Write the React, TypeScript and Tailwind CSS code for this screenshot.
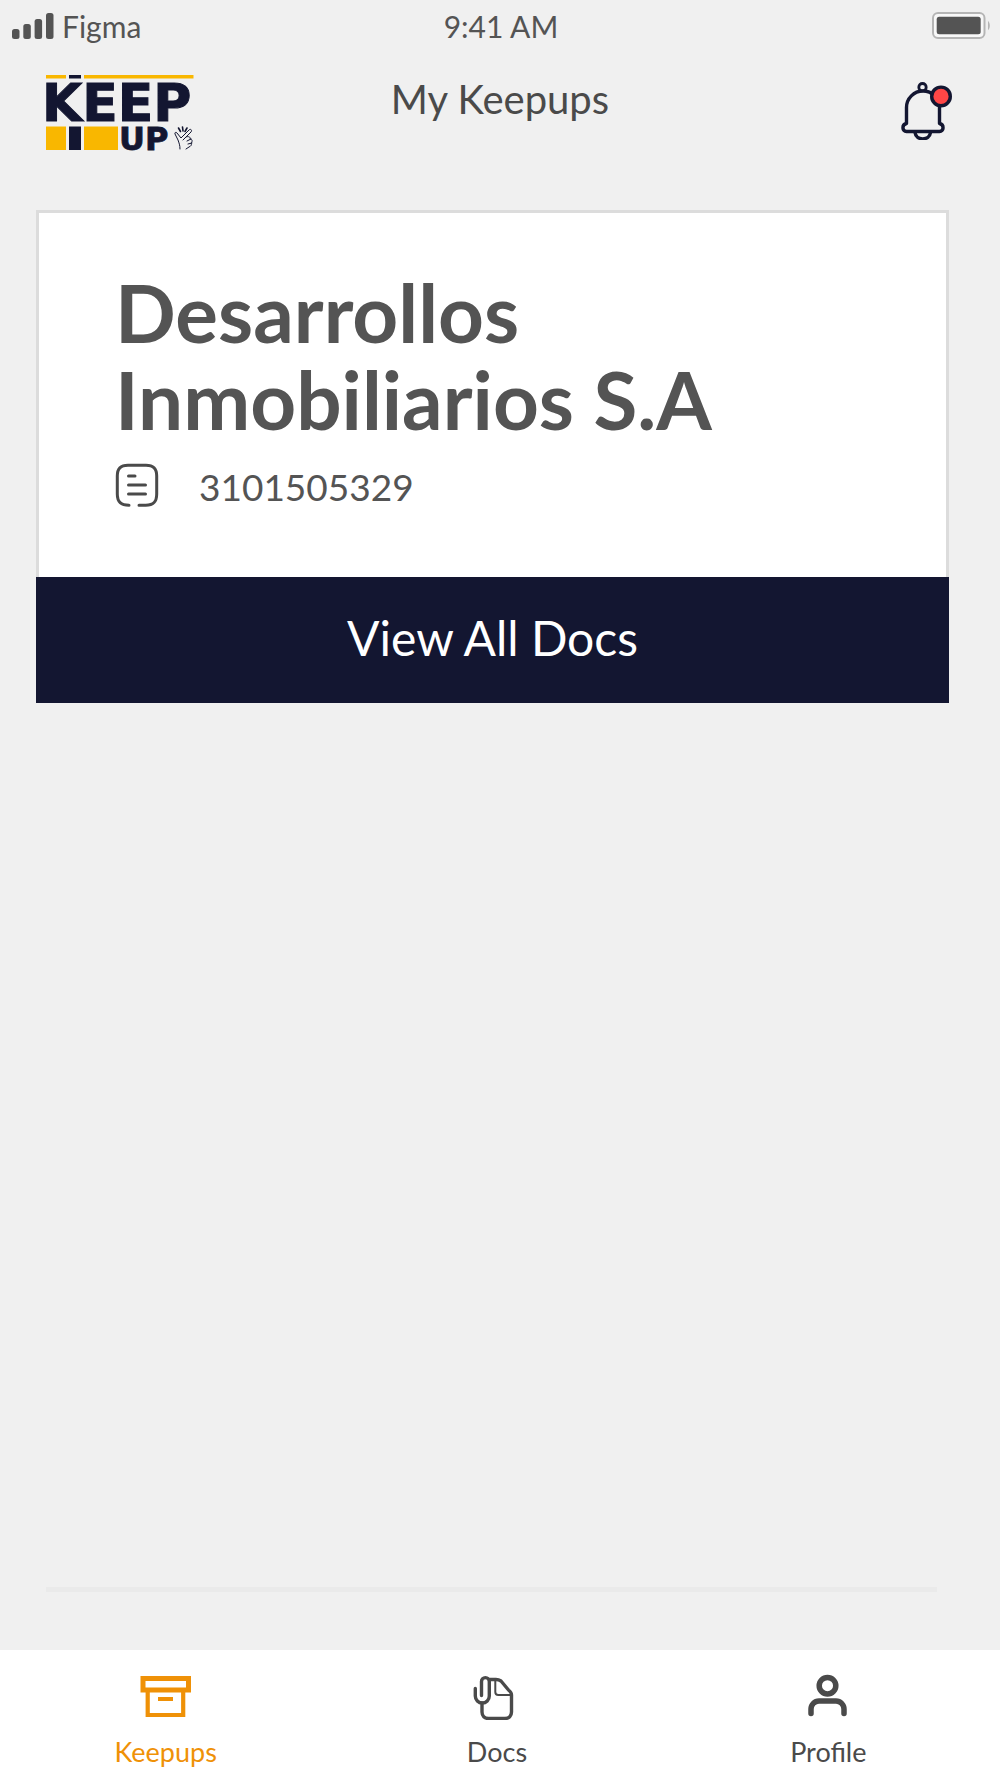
import type { ReactNode } from "react"

function SignalIcon() {
  return (
    <svg width="42" height="26" viewBox="0 0 42 26" fill="#545454" aria-hidden="true">
      <rect x="0" y="16" width="7.5" height="10" rx="2.5" />
      <rect x="11.3" y="11" width="7.5" height="15" rx="2.5" />
      <rect x="22.6" y="6" width="7.5" height="20" rx="2.5" />
      <rect x="34" y="0" width="7.5" height="26" rx="2.5" />
    </svg>
  )
}

function BatteryIcon() {
  return (
    <svg width="58" height="28" viewBox="0 0 58 28" aria-hidden="true">
      <rect x="1" y="1" width="51.5" height="25" rx="5" fill="#f8f8f8" stroke="#b5b5b5" strokeWidth="2" />
      <rect x="4.7" y="4.7" width="44" height="17.6" rx="2.5" fill="#545454" />
      <path d="M56 9c2.4 1.6 2.4 7.6 0 9.2z" fill="#b5b5b5" />
    </svg>
  )
}

function Logo() {
  return (
    <svg width="148" height="76" viewBox="0 0 148 76" role="img" aria-label="Keep Up" className="overflow-visible">
      <g fill="#f9b700">
        <rect x="0" y="0" width="20" height="3.5" />
        <rect x="38" y="0" width="109.5" height="3.5" />
        <rect x="0" y="51.5" width="20" height="23.5" />
        <rect x="38" y="51.5" width="34" height="23.5" />
      </g>
      <g fill="#131631">
        <rect x="23" y="0" width="12" height="3.5" />
        <rect x="23" y="51.5" width="12" height="23.5" />
        <text x="-4" y="46" fontSize="52" className="font-['DejaVu_Sans'] font-bold" stroke="#131631" strokeWidth="1">
          KEEP
        </text>
        <text x="73" y="74.5" fontSize="32" className="font-['DejaVu_Sans'] font-bold" stroke="#131631" strokeWidth="0.8">
          UP
        </text>
      </g>
      <g fill="none" stroke="#131631" strokeWidth="1" strokeLinecap="round" strokeLinejoin="round">
        <path d="M134 74c0-4-1-6-2-9l-3-6c-.6-1.6 1-2.3 2-1l4 5 8-8c1.500-1.500 3.500 0 2 2l-5 5c2-1 5 0 4 2 2 0 3 2 1 4 1 2 0 3-2 4l-3 2" />
        <path d="M140 62l-3 3M145 64l-4 2M146 68l-4 1" />
        <path d="M136.5 52l.5 4M132.5 53l2 3.5M141 53l-2 3.5" strokeWidth="1.6" />
      </g>
    </svg>
  )
}

function BellIcon() {
  return (
    <svg width="54" height="58" viewBox="0 0 54 58" fill="none" stroke="#131631" strokeWidth="3.4" aria-hidden="true">
      <circle cx="22.5" cy="5.2" r="3.7" strokeWidth="2.8" />
      <path d="M6.5 41.5V25.5a16 16 0 0 1 33 0V41.5c5 1 4.5 8 0 8h-33c-4.5 0-5-7 0-8z" strokeLinejoin="round" />
      <path d="M15 50.5c1 8.5 14.5 8.5 15.5 0" />
      <circle cx="41" cy="14.4" r="9.3" fill="#ff4646" />
    </svg>
  )
}

function IdIcon() {
  return (
    <svg width="44" height="44" viewBox="0 0 44 44" fill="none" stroke="#4a4a4a" strokeWidth="3" strokeLinecap="round" aria-hidden="true">
      <path d="M14 42.2C6 42.2 2.3 39 2.3 31V13C2.3 5.5 5.5 2.3 13 2.3h18C38.5 2.3 41.7 5.5 41.7 13v18c0 8-3.2 11.2-11 11.2H24" />
      <path d="M13.5 13H20M13.5 22h17M13.5 31h17" />
    </svg>
  )
}

function BoxIcon() {
  return (
    <svg width="52" height="46" viewBox="0 0 52 46" fill="none" stroke="currentColor" aria-hidden="true">
      <path d="M3 4.500h45.500v11.500H3z" strokeWidth="5" />
      <path d="M7.7 16v25h35.5V16" strokeWidth="4.2" />
      <path d="M18 25h15" strokeWidth="4" />
    </svg>
  )
}

function DocsIcon() {
  return (
    <svg width="50" height="46" viewBox="0 0 50 46" fill="none" stroke="currentColor" strokeWidth="3.4" strokeLinecap="round" strokeLinejoin="round" aria-hidden="true">
      <path d="M3.3 14.5v7.5a7 7 0 0 0 14 0V7.5a3.9 3.9 0 0 0-7.8 0v14" />
      <path d="M10 29v9c0 4 2.5 6.5 6.5 6.5h16.5c4 0 6.5-2.5 6.5-6.5V21c0-2-1-3.5-3-5L29 7c-2-1.3-3-1.5-5-1.5h-6" />
      <path d="M23.3 6v12c0 2 1 3 3 3H39" strokeWidth="2" />
    </svg>
  )
}

function ProfileIcon() {
  return (
    <svg width="42" height="46" viewBox="0 0 42 46" fill="none" stroke="currentColor" strokeWidth="5.5" strokeLinecap="round" aria-hidden="true">
      <circle cx="20.5" cy="11.7" r="8.3" />
      <path d="M4 39.5V35a8 8 0 0 1 8-8h17a8 8 0 0 1 8 8v4.5" />
    </svg>
  )
}

interface NavItemProps {
  label: string
  icon: ReactNode
  active?: boolean
}

function NavItem({ label, icon, active }: NavItemProps) {
  return (
    <a
      href="#"
      aria-current={active ? "page" : undefined}
      className={`flex flex-col items-center gap-4 ${active ? "text-[#ef9107]" : "text-[#4a4a4a]"}`}
    >
      {icon}
      <span className="text-[27px] leading-8">{label}</span>
    </a>
  )
}

export default function App() {
  return (
    <div className="flex min-h-screen flex-col bg-[#f0f0f0] font-[Lato,sans-serif] text-[#545454]">
      <div className="grid grid-cols-3 items-center pt-2 pr-[10px] pl-3 text-[30px] leading-9">
        <div className="flex items-center gap-2">
          <SignalIcon />
          <span>Figma</span>
        </div>
        <span className="text-center">9:41 AM</span>
        <div className="flex justify-end">
          <BatteryIcon />
        </div>
      </div>

      <header className="grid grid-cols-3 items-start pt-[31px] pr-[46px] pl-[46px]">
        <Logo />
        <h1 className="text-center text-[40px] leading-12 text-[#4a4a4a]">My Keepups</h1>
        <button type="button" aria-label="Notifications" className="justify-self-end pt-[7px]">
          <BellIcon />
        </button>
      </header>

      <main className="flex flex-1 flex-col pt-[59px] pr-[51px] pl-9">
        <section>
          <div className="border-[3px] border-b-0 border-[#dcdcdc] bg-white px-[76px] pt-14 pb-[66px]">
            <h2 className="max-w-[640px] text-[80px] leading-[87px] font-bold">Desarrollos Inmobiliarios S.A</h2>
            <div className="flex items-start gap-10 pt-5">
              <IdIcon />
              <span className="text-[37px] leading-12">3101505329</span>
            </div>
          </div>
          <button type="button" className="h-[126px] w-full bg-[#131631] pb-1 text-[48px] text-white">
            View All Docs
          </button>
        </section>
        <hr className="mt-auto mr-3 mb-[58px] ml-[10px] border-t-[5px] border-[#eaeaea]" />
      </main>

      <nav className="grid grid-cols-3 bg-white pt-6 pr-[6px] pb-[10px]">
        <NavItem label="Keepups" icon={<BoxIcon />} active />
        <NavItem label="Docs" icon={<DocsIcon />} />
        <NavItem label="Profile" icon={<ProfileIcon />} />
      </nav>
    </div>
  )
}
